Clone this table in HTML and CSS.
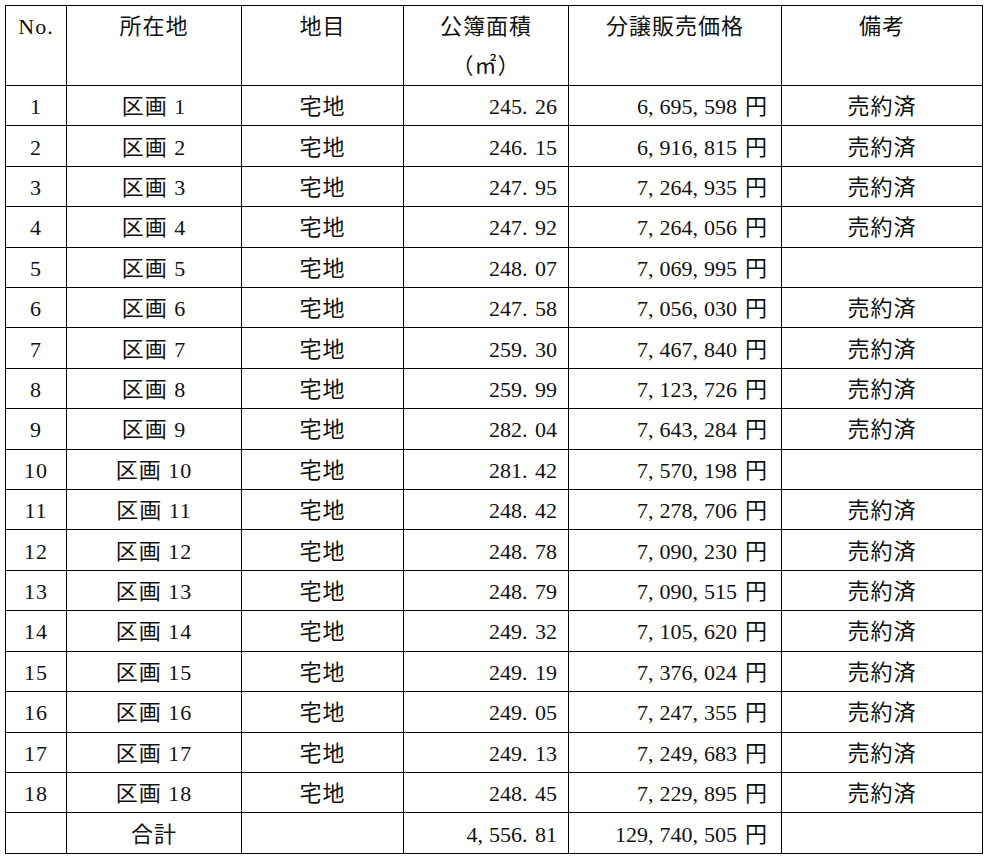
FILE: index.html
```html
<!DOCTYPE html>
<html lang="ja">
<head>
<meta charset="utf-8">
<title>分譲区画一覧</title>
<link rel="stylesheet" href="styles.css">
</head>
<body>
<table class="lots">
  <colgroup>
    <col class="c-no"><col class="c-loc"><col class="c-type"><col class="c-area"><col class="c-price"><col class="c-note">
  </colgroup>
  <thead>
    <tr class="head">
      <th>No.</th>
      <th>所在地</th>
      <th>地目</th>
      <th>公簿面積<br>（㎡）</th>
      <th>分譲販売価格</th>
      <th>備考</th>
    </tr>
  </thead>
  <tbody>
    <tr><td class="ctr">1</td><td class="ctr">区画 1</td><td class="ctr">宅地</td><td class="num">245<span class="dot">.</span>26</td><td class="price">6<span class="cm">,</span>695<span class="cm">,</span>598<span class="yen">円</span></td><td class="ctr">売約済</td></tr>
    <tr><td class="ctr">2</td><td class="ctr">区画 2</td><td class="ctr">宅地</td><td class="num">246<span class="dot">.</span>15</td><td class="price">6<span class="cm">,</span>916<span class="cm">,</span>815<span class="yen">円</span></td><td class="ctr">売約済</td></tr>
    <tr><td class="ctr">3</td><td class="ctr">区画 3</td><td class="ctr">宅地</td><td class="num">247<span class="dot">.</span>95</td><td class="price">7<span class="cm">,</span>264<span class="cm">,</span>935<span class="yen">円</span></td><td class="ctr">売約済</td></tr>
    <tr><td class="ctr">4</td><td class="ctr">区画 4</td><td class="ctr">宅地</td><td class="num">247<span class="dot">.</span>92</td><td class="price">7<span class="cm">,</span>264<span class="cm">,</span>056<span class="yen">円</span></td><td class="ctr">売約済</td></tr>
    <tr><td class="ctr">5</td><td class="ctr">区画 5</td><td class="ctr">宅地</td><td class="num">248<span class="dot">.</span>07</td><td class="price">7<span class="cm">,</span>069<span class="cm">,</span>995<span class="yen">円</span></td><td class="ctr"></td></tr>
    <tr><td class="ctr">6</td><td class="ctr">区画 6</td><td class="ctr">宅地</td><td class="num">247<span class="dot">.</span>58</td><td class="price">7<span class="cm">,</span>056<span class="cm">,</span>030<span class="yen">円</span></td><td class="ctr">売約済</td></tr>
    <tr><td class="ctr">7</td><td class="ctr">区画 7</td><td class="ctr">宅地</td><td class="num">259<span class="dot">.</span>30</td><td class="price">7<span class="cm">,</span>467<span class="cm">,</span>840<span class="yen">円</span></td><td class="ctr">売約済</td></tr>
    <tr><td class="ctr">8</td><td class="ctr">区画 8</td><td class="ctr">宅地</td><td class="num">259<span class="dot">.</span>99</td><td class="price">7<span class="cm">,</span>123<span class="cm">,</span>726<span class="yen">円</span></td><td class="ctr">売約済</td></tr>
    <tr><td class="ctr">9</td><td class="ctr">区画 9</td><td class="ctr">宅地</td><td class="num">282<span class="dot">.</span>04</td><td class="price">7<span class="cm">,</span>643<span class="cm">,</span>284<span class="yen">円</span></td><td class="ctr">売約済</td></tr>
    <tr><td class="ctr">10</td><td class="ctr">区画 10</td><td class="ctr">宅地</td><td class="num">281<span class="dot">.</span>42</td><td class="price">7<span class="cm">,</span>570<span class="cm">,</span>198<span class="yen">円</span></td><td class="ctr"></td></tr>
    <tr><td class="ctr">11</td><td class="ctr">区画 11</td><td class="ctr">宅地</td><td class="num">248<span class="dot">.</span>42</td><td class="price">7<span class="cm">,</span>278<span class="cm">,</span>706<span class="yen">円</span></td><td class="ctr">売約済</td></tr>
    <tr><td class="ctr">12</td><td class="ctr">区画 12</td><td class="ctr">宅地</td><td class="num">248<span class="dot">.</span>78</td><td class="price">7<span class="cm">,</span>090<span class="cm">,</span>230<span class="yen">円</span></td><td class="ctr">売約済</td></tr>
    <tr><td class="ctr">13</td><td class="ctr">区画 13</td><td class="ctr">宅地</td><td class="num">248<span class="dot">.</span>79</td><td class="price">7<span class="cm">,</span>090<span class="cm">,</span>515<span class="yen">円</span></td><td class="ctr">売約済</td></tr>
    <tr><td class="ctr">14</td><td class="ctr">区画 14</td><td class="ctr">宅地</td><td class="num">249<span class="dot">.</span>32</td><td class="price">7<span class="cm">,</span>105<span class="cm">,</span>620<span class="yen">円</span></td><td class="ctr">売約済</td></tr>
    <tr><td class="ctr">15</td><td class="ctr">区画 15</td><td class="ctr">宅地</td><td class="num">249<span class="dot">.</span>19</td><td class="price">7<span class="cm">,</span>376<span class="cm">,</span>024<span class="yen">円</span></td><td class="ctr">売約済</td></tr>
    <tr><td class="ctr">16</td><td class="ctr">区画 16</td><td class="ctr">宅地</td><td class="num">249<span class="dot">.</span>05</td><td class="price">7<span class="cm">,</span>247<span class="cm">,</span>355<span class="yen">円</span></td><td class="ctr">売約済</td></tr>
    <tr><td class="ctr">17</td><td class="ctr">区画 17</td><td class="ctr">宅地</td><td class="num">249<span class="dot">.</span>13</td><td class="price">7<span class="cm">,</span>249<span class="cm">,</span>683<span class="yen">円</span></td><td class="ctr">売約済</td></tr>
    <tr><td class="ctr">18</td><td class="ctr">区画 18</td><td class="ctr">宅地</td><td class="num">248<span class="dot">.</span>45</td><td class="price">7<span class="cm">,</span>229<span class="cm">,</span>895<span class="yen">円</span></td><td class="ctr">売約済</td></tr>
    <tr><td class="ctr"></td><td class="ctr">合計</td><td class="ctr"></td><td class="num">4<span class="cm">,</span>556<span class="dot">.</span>81</td><td class="price">129<span class="cm">,</span>740<span class="cm">,</span>505<span class="yen">円</span></td><td class="ctr"></td></tr>
  </tbody>
</table>
</body>
</html>
```

FILE: styles.css
```css
html, body {
  background: #ffffff;
}
body {
  margin: 0;
  padding: 5px;
  font-family: "Liberation Serif", "Noto Sans CJK JP", serif;
  font-size: 22px;
  color: #111111;
}
.lots {
  border-collapse: collapse;
  table-layout: fixed;
  width: 977px;
}
.c-no { width: 61px; }
.c-loc { width: 175px; }
.c-type { width: 162px; }
.c-area { width: 165px; }
.c-price { width: 213px; }
.c-note { width: 201px; }

.lots th,
.lots td {
  border: 1px solid #000000;
  padding: 0;
  font-weight: normal;
  letter-spacing: 1px;
  white-space: nowrap;
}
.head th {
  height: 78px;
  vertical-align: top;
  text-align: center;
  line-height: 39px;
  padding-top: 1px;
}
.lots tbody tr {
  height: 40.42px;
}
.lots td {
  line-height: 34px;
  vertical-align: middle;
  padding-top: 3px;
}
.ctr { text-align: center; }
.num {
  text-align: right;
  padding-right: 11px !important;
  letter-spacing: 0 !important;
}
.price {
  text-align: right;
  padding-right: 14px !important;
  letter-spacing: 0 !important;
}
.dot,
.cm {
  display: inline-block;
  text-align: left;
}
.dot { width: 13px; }
.cm { width: 11.5px; }
.yen {
  margin-left: 8px;
}
```
